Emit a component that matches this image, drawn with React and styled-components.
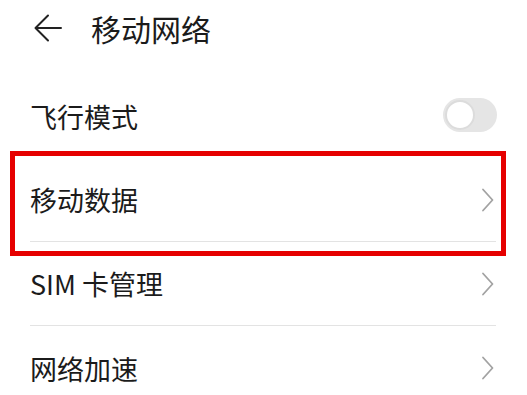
import styled, { createGlobalStyle } from "styled-components";

const GlobalStyle = createGlobalStyle`
  body {
    margin: 0;
    background: #fff;
    font-family: "Noto Sans CJK SC", "Noto Sans", sans-serif;
    color: #1b1b1b;
  }
`;

const Page = styled.div`
  width: 527px;
  height: 395px;
  overflow: hidden;
  background: #fff;
`;

const Header = styled.div`
  display: flex;
  align-items: center;
  height: 55px;
  padding-left: 33px;
  gap: 28px;
  margin-bottom: 19px;
`;

const Title = styled.h1`
  margin: 0;
  font-size: 30px;
  font-weight: 400;
  line-height: 1;
  letter-spacing: 0;
`;

const List = styled.div`
  display: flex;
  flex-direction: column;
`;

const Row = styled.div`
  position: relative;
  display: flex;
  align-items: center;
  justify-content: space-between;
  height: 84px;
  margin: 0 31px 0 30px;
  box-sizing: border-box;
  border-bottom: ${(p) => (p.$divider ? "1px solid #e3e3e3" : "none")};
`;

const Label = styled.span`
  font-size: 27px;
  font-weight: 400;
  line-height: 1;
`;

const Toggle = styled.div`
  width: 54px;
  height: 34px;
  border-radius: 17px;
  background: #e5e5e5;
  display: flex;
  align-items: center;
  padding: 0 2px;
  box-sizing: border-box;
  margin-right: -1px;
  margin-top: -2px;
`;

const Knob = styled.div`
  width: 30px;
  height: 30px;
  border-radius: 50%;
  background: #fff;
  box-sizing: border-box;
  border: 2px solid #dcdcdc;
`;

const Highlight = styled.div`
  position: absolute;
  top: -7px;
  bottom: -15px;
  left: -20px;
  right: -10px;
  border: 5px solid #e60000;
  pointer-events: none;
`;

const Back = () => (
  <svg width="30" height="30" viewBox="0 0 30 30" fill="none">
    <path d="M28 15H3M15 2.5L2.5 15L15 27.5" stroke="#222" strokeWidth="2" strokeLinecap="round" strokeLinejoin="round" />
  </svg>
);

const Chevron = () => (
  <svg width="14" height="24" viewBox="0 0 14 24" fill="none" style={{ marginRight: 1 }}>
    <path d="M2 1.5L11.5 12L2 22.5" stroke="#a2a2a2" strokeWidth="1.8" strokeLinecap="round" strokeLinejoin="round" />
  </svg>
);

export default function App() {
  return (
    <Page>
      <GlobalStyle />
      <Header>
        <Back />
        <Title>移动网络</Title>
      </Header>
      <List>
        <Row>
          <Label>飞行模式</Label>
          <Toggle>
            <Knob />
          </Toggle>
        </Row>
        <Row $divider>
          <Label>移动数据</Label>
          <Chevron />
          <Highlight />
        </Row>
        <Row $divider>
          <Label>SIM 卡管理</Label>
          <Chevron />
        </Row>
        <Row>
          <Label>网络加速</Label>
          <Chevron />
        </Row>
      </List>
    </Page>
  );
}
